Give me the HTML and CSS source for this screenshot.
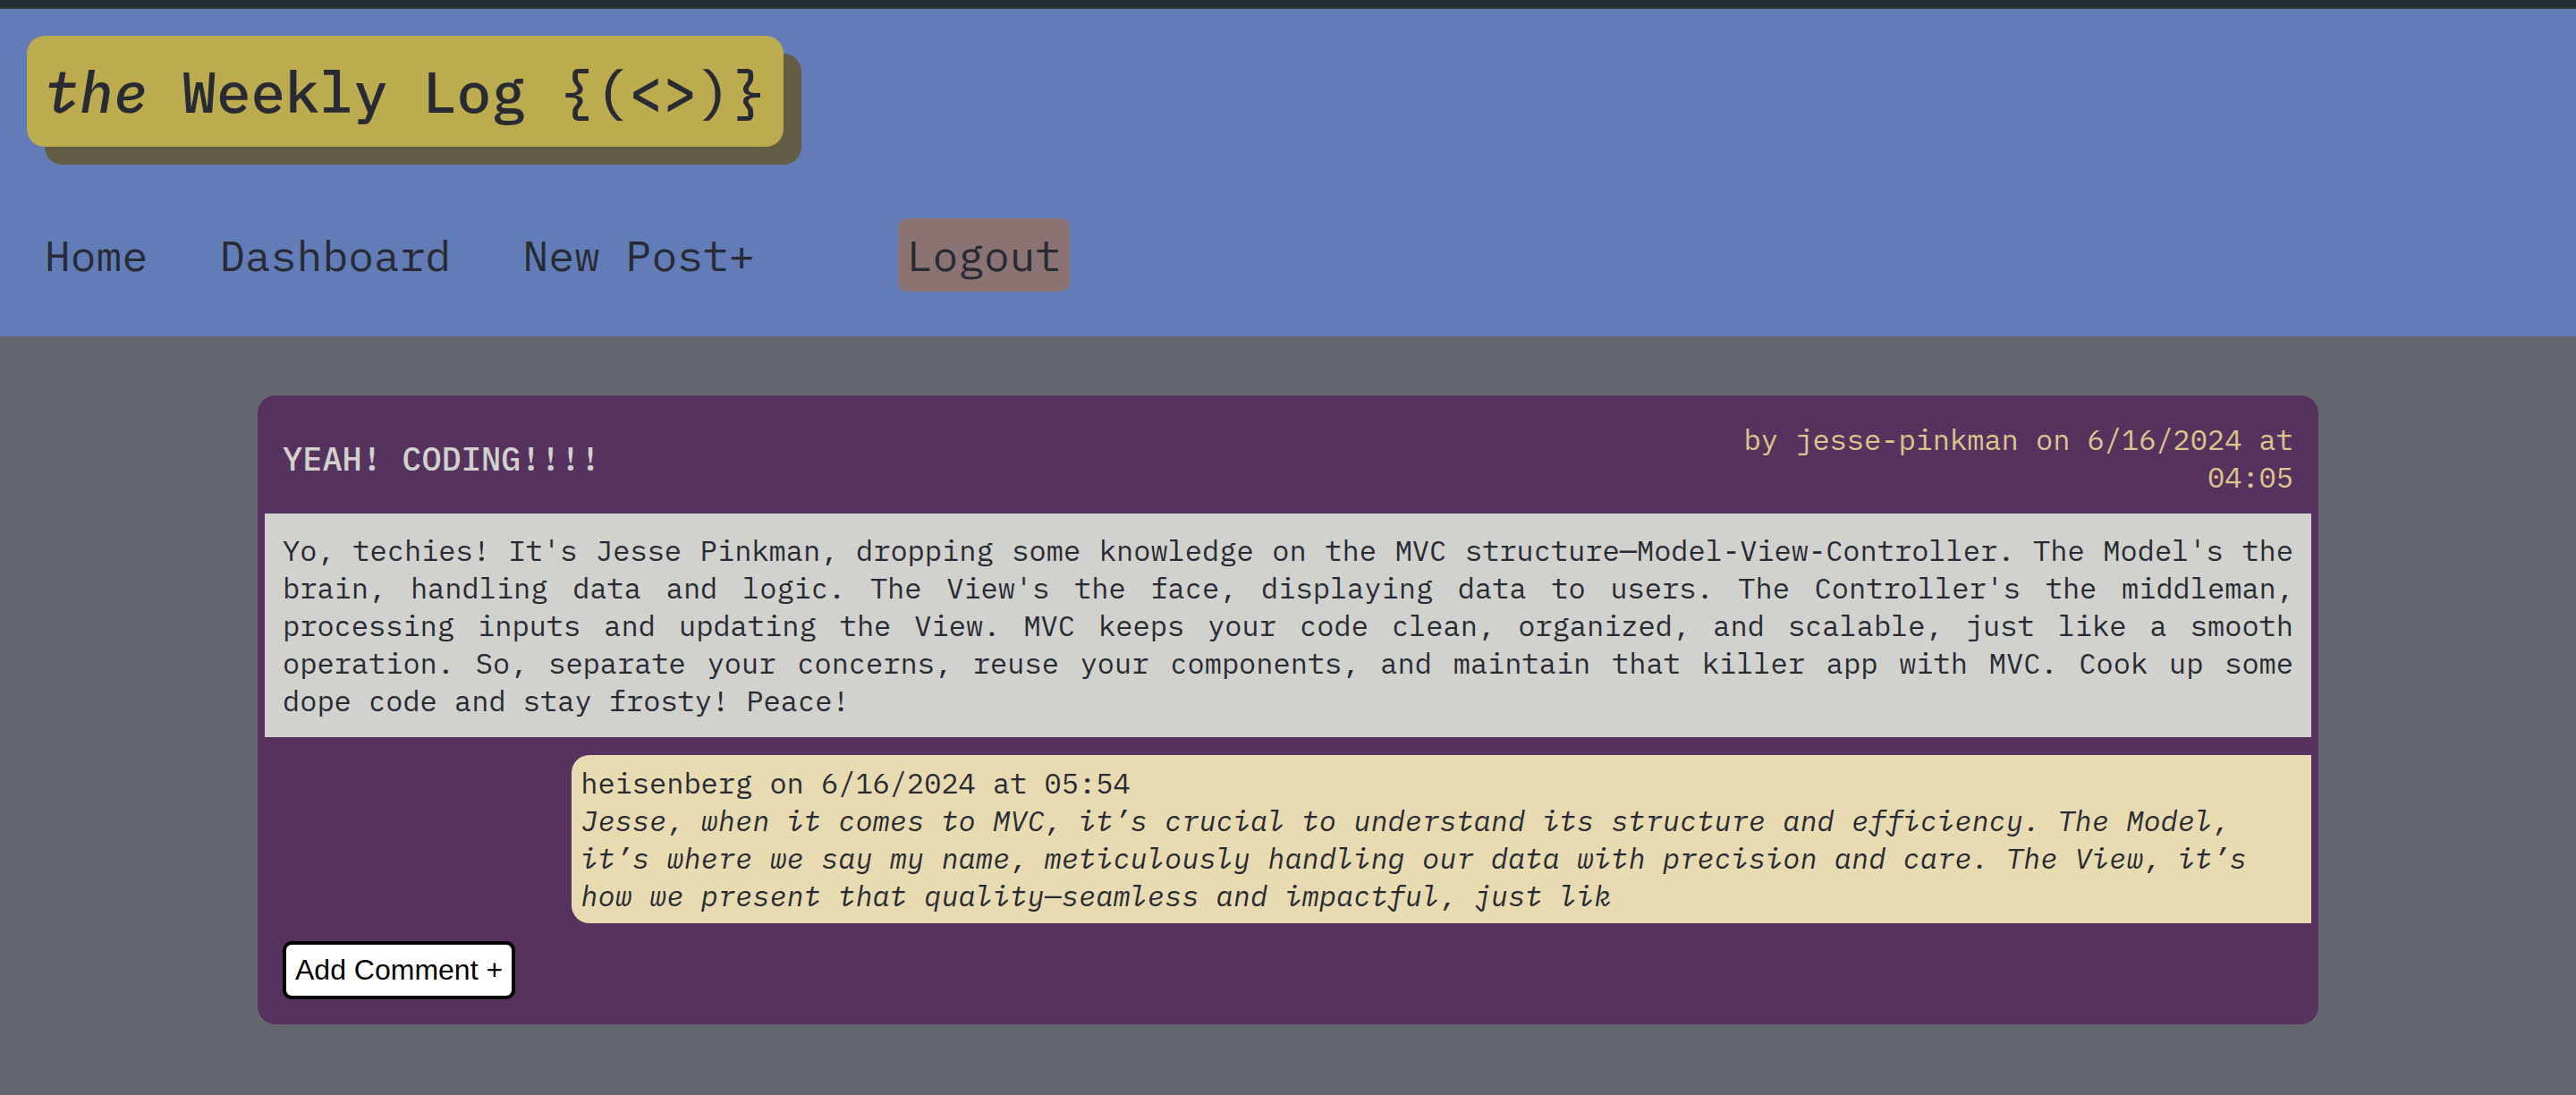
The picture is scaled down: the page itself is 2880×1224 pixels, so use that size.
FILE: index.html
```html
<!DOCTYPE html>
<html lang="en">
<head>
  <meta charset="utf-8">
  <meta name="viewport" content="width=device-width, initial-scale=1">
  <title>the Weekly Log</title>
  <link rel="stylesheet" href="styles.css">
</head>
<body>
  <header class="site-header">
    <h1 class="logo"><em>the</em> Weekly Log {(&lt;&gt;)}</h1>
    <nav>
      <ul class="nav-list">
        <li><a class="nav-link" href="#home">Home</a></li>
        <li><a class="nav-link" href="#dashboard">Dashboard</a></li>
        <li><a class="nav-link" href="#new-post">New Post+</a></li>
        <li class="nav-session"><a class="nav-link nav-logout" href="#logout">Logout</a></li>
      </ul>
    </nav>
  </header>
  <main class="content">
    <article class="post">
      <header class="post-header">
        <h2 class="post-title">YEAH! CODING!!!!</h2>
        <p class="post-meta">by jesse-pinkman on 6/16/2024 at 04:05</p>
      </header>
      <p class="post-body">Yo, techies! It's Jesse Pinkman, dropping some knowledge on the MVC structure—Model-View-Controller. The Model's the brain, handling data and logic. The View's the face, displaying data to users. The Controller's the middleman, processing inputs and updating the View. MVC keeps your code clean, organized, and scalable, just like a smooth operation. So, separate your concerns, reuse your components, and maintain that killer app with MVC. Cook up some dope code and stay frosty! Peace!</p>
      <section class="comment">
        <p>heisenberg on 6/16/2024 at 05:54</p>
        <p class="comment-text">Jesse, when it comes to MVC, it’s crucial to understand its structure and efficiency. The Model, it’s where we say my name, meticulously handling our data with precision and care. The View, it’s how we present that quality—seamless and impactful, just lik</p>
      </section>
      <footer class="post-footer">
        <button class="add-comment" type="button">Add Comment +</button>
      </footer>
    </article>
  </main>
</body>
</html>
```

FILE: styles.css
```css
:root {
  --ink: #282b33;
  --blue: #617cb6;
  --slate: #62666e;
  --gold: #bdab50;
  --gold-shadow: #625d44;
  --rose: #8b7373;
  --purple: #56335f;
  --paper: #d1d2cd;
  --sand: #e8dbb2;
  --tan: #dec58c;
}

* {
  box-sizing: border-box;
  margin: 0;
  padding: 0;
}

body {
  min-height: 100vh;
  border-top: 8px solid #242d35;
  background: var(--slate);
  color: var(--ink);
  font-family: "IBM Plex Mono", "Liberation Mono", monospace;
  font-size: 32px;
  line-height: 42px;
}

.site-header {
  display: flex;
  flex-direction: column;
  align-items: flex-start;
  gap: 80px;
  padding: 30px 30px 50px;
  border-top: 2px solid #35383b;
  background: var(--blue);
}

.logo {
  padding: 20px;
  border-radius: 20px;
  background: var(--gold);
  box-shadow: 20px 20px 0 var(--gold-shadow);
  font-size: 64px;
  font-weight: 500;
  line-height: 84px;
}

.logo em,
.comment-text {
  font-family: "IBM Plex Mono Text", "IBM Plex Mono Regular", "IBM Plex Mono", "Liberation Mono", monospace;
  font-style: italic;
}

.nav-list {
  display: flex;
  flex-wrap: wrap;
  gap: 60px;
  padding: 0 10px;
  list-style: none;
}

.nav-session {
  margin-left: 90px;
}

.nav-link {
  display: block;
  padding: 10px;
  border-radius: 10px;
  color: inherit;
  font-size: 48px;
  line-height: 62px;
  text-decoration: none;
}

.nav-logout {
  background: var(--rose);
}

.content {
  padding: 66px 10%;
}

.post {
  padding: 8px;
  border-radius: 20px;
  background: var(--purple);
}

.post-header {
  display: flex;
  align-items: center;
  justify-content: space-between;
  padding: 20px;
}

.post-title {
  color: var(--paper);
  font-size: 37px;
  font-weight: 500;
  line-height: 48px;
}

.post-meta {
  width: 30%;
  color: var(--tan);
  text-align: right;
}

.post-body {
  padding: 20px;
  background: var(--paper);
  text-align: justify;
}

.comment {
  width: 85%;
  margin: 20px 0 20px auto;
  padding: 10px;
  border-radius: 20px 0 0 20px;
  background: var(--sand);
}

.post-footer {
  display: flex;
  padding: 0 20px 20px;
}

.add-comment {
  padding: 10px;
  border: 4px solid #000;
  border-radius: 10px;
  background: #fff;
  color: #000;
  font: 32px/37px "Liberation Sans", Arial, sans-serif;
}
```
